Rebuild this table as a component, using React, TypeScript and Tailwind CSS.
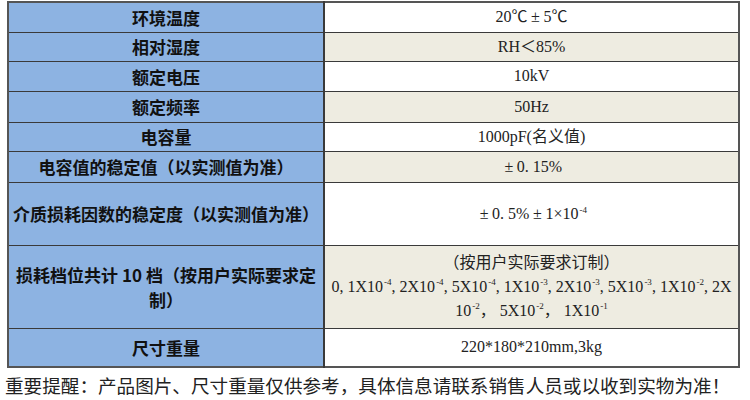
import React from 'react';

type Row = { label: React.ReactNode; value: React.ReactNode; h: string; tan: boolean };

const Sup: React.FC<{ children: React.ReactNode }> = ({ children }) => (
  <span className="inline-block align-top text-[9px] leading-[9px] ml-[1px] mt-[3px]">{children}</span>
);

const Pm: React.FC = () => <span className="inline-block w-[16px] text-center">±</span>;

const rows: Row[] = [
  {
    label: '环境温度',
    value: (
      <>
        20℃<Pm />5℃
      </>
    ),
    h: 'h-[30px]',
    tan: false,
  },
  { label: '相对湿度', value: 'RH＜85%', h: 'h-[29px]', tan: true },
  { label: '额定电压', value: '10kV', h: 'h-[30px]', tan: false },
  { label: '额定频率', value: '50Hz', h: 'h-[31px]', tan: true },
  { label: '电容量', value: '1000pF(名义值)', h: 'h-[29px]', tan: false },
  {
    label: '电容值的稳定值（以实测值为准）',
    value: (
      <>
        <Pm />0. 15%
      </>
    ),
    h: 'h-[31px]',
    tan: true,
  },
  {
    label: '介质损耗因数的稳定度（以实测值为准）',
    value: (
      <>
        <Pm />0. 5%<Pm />1×10<Sup>-4</Sup>
      </>
    ),
    h: 'h-[63px]',
    tan: false,
  },
  {
    label: '损耗档位共计 10 档（按用户实际要求定制）',
    value: (
      <div className="leading-[24px]">
        <div>（按用户实际要求订制）</div>
        <div className="whitespace-nowrap">
          0, 1X10<Sup>-4</Sup>, 2X10<Sup>-4</Sup>, 5X10<Sup>-4</Sup>, 1X10<Sup>-3</Sup>, 2X10<Sup>-3</Sup>, 5X10
          <Sup>-3</Sup>, 1X10<Sup>-2</Sup>, 2X
        </div>
        <div>
          10<Sup>-2</Sup>，&nbsp;5X10<Sup>-2</Sup>，&nbsp;1X10<Sup>-1</Sup>
        </div>
      </div>
    ),
    h: 'h-[83px]',
    tan: true,
  },
  { label: '尺寸重量', value: '220*180*210mm,3kg', h: 'h-[39px]', tan: false },
];

export default function App() {
  return (
    <div className="w-[750px] h-[400px] bg-white overflow-hidden pt-[1px] pl-[7px]">
      <table className="border-collapse w-[731px] border-2 border-[#555555] table-fixed">
        <colgroup>
          <col className="w-[316px]" />
          <col className="w-[415px]" />
        </colgroup>
        <tbody>
          {rows.map((r, i) => (
            <tr key={i}>
              <td
                className={`${r.h} bg-[#8db3e2] border border-[#3a3a3a] border-r-2 px-[2px] text-center align-middle font-bold text-[17px] leading-[25px] text-[#111] [font-family:'Noto_Sans_CJK_SC',sans-serif]`}
              >
                {r.label}
              </td>
              <td
                className={`${r.h} ${r.tan ? 'bg-[#eeece1]' : 'bg-white'} border border-[#3a3a3a] px-[2px] text-center align-middle text-[16px] leading-[22px] text-[#222] [font-family:'Liberation_Serif','Noto_Sans_CJK_SC',serif]`}
              >
                {r.value}
              </td>
            </tr>
          ))}
        </tbody>
      </table>
      <p className="mt-[6px] -ml-[2px] whitespace-nowrap text-[18.6px] leading-[22px] text-[#222] [font-family:'Noto_Sans_CJK_SC',sans-serif]">
        重要提醒：产品图片、尺寸重量仅供参考，具体信息请联系销售人员或以收到实物为准！
      </p>
    </div>
  );
}
